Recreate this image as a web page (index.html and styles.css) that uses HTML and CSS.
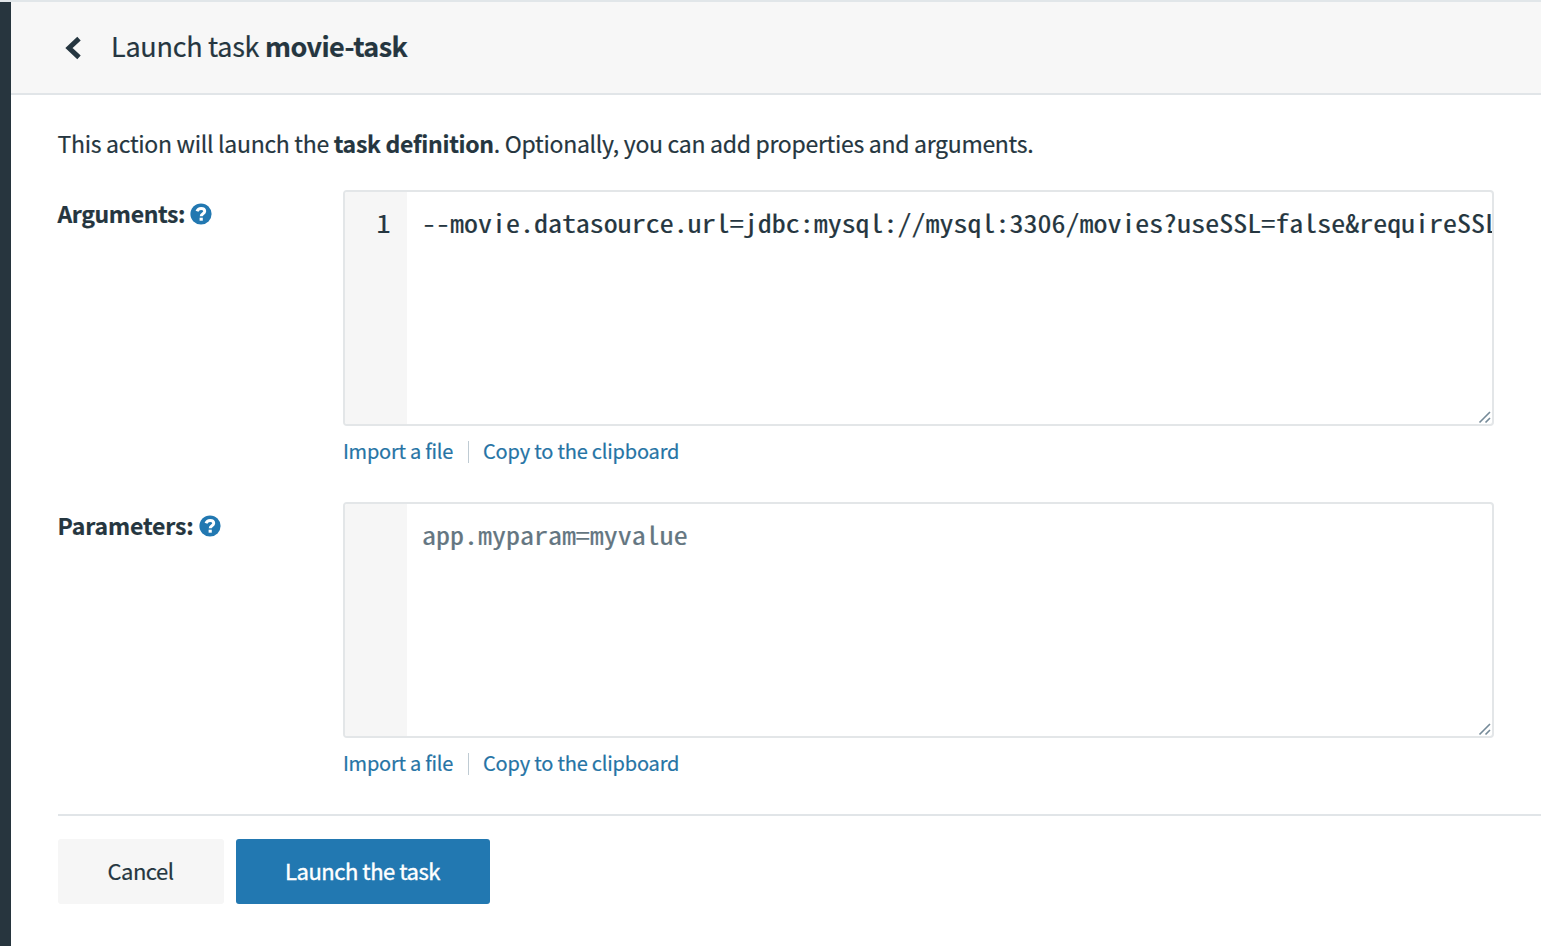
FILE: index.html
```html
<!DOCTYPE html>
<html lang="en">
<head>
<meta charset="utf-8">
<title>Launch task movie-task</title>
<link rel="stylesheet" href="styles.css">
</head>
<body>
<div class="app">
  <aside class="rail"></aside>
  <main class="page">
    <header class="header">
      <svg class="back" width="18" height="24" viewBox="0 0 18 24"><path d="M15 2.6 5 12l10 9.4" fill="none" stroke="#253640" stroke-width="5"/></svg>
      <h1 class="title"><span class="title-light">Launch task</span> <strong>movie-task</strong></h1>
    </header>
    <div class="content">
      <p class="intro">This action will launch the <strong>task definition</strong>. Optionally, you can add properties and arguments.</p>
      <section class="row">
        <div class="label"><span class="label-arguments">Arguments:</span>
          <svg class="help" width="22" height="22" viewBox="0 0 22 22"><circle cx="11" cy="11" r="10.6" fill="#2278b1"/><path d="M7 8.3Q8 5.5 11.1 5.5c2.2 0 3.6 1.1 3.6 2.8 0 2.5-3.5 2.3-3.5 4.9" fill="none" stroke="#fff" stroke-width="3"/><path d="M9.6 14.7h3.2v3H9.6z" fill="#fff"/></svg>
        </div>
        <div class="field">
          <div class="editor">
            <div class="gutter"><span class="mono line-number">1</span></div>
            <div class="code"><span class="mono">--movie.datasource.url=jdbc:mysql://mysql:3306/movies?useSSL=false&amp;requireSSL</span></div>
            <svg class="grip" width="14" height="14" viewBox="0 0 14 14"><path d="M1.5 12.5 12 2M7.5 12.5 12 8" stroke="#758a98" stroke-width="1.6"/></svg>
          </div>
          <div class="links"><a class="import">Import a file</a><span class="divider"></span><a class="copy">Copy to the clipboard</a></div>
        </div>
      </section>
      <section class="row">
        <div class="label"><span class="label-parameters">Parameters:</span>
          <svg class="help" width="22" height="22" viewBox="0 0 22 22"><circle cx="11" cy="11" r="10.6" fill="#2278b1"/><path d="M7 8.3Q8 5.5 11.1 5.5c2.2 0 3.6 1.1 3.6 2.8 0 2.5-3.5 2.3-3.5 4.9" fill="none" stroke="#fff" stroke-width="3"/><path d="M9.6 14.7h3.2v3H9.6z" fill="#fff"/></svg>
        </div>
        <div class="field">
          <div class="editor">
            <div class="gutter"></div>
            <div class="code placeholder"><span class="mono">app.myparam=myvalue</span></div>
            <svg class="grip" width="14" height="14" viewBox="0 0 14 14"><path d="M1.5 12.5 12 2M7.5 12.5 12 8" stroke="#758a98" stroke-width="1.6"/></svg>
          </div>
          <div class="links"><a class="import">Import a file</a><span class="divider"></span><a class="copy">Copy to the clipboard</a></div>
        </div>
      </section>
      <footer class="actions">
        <button class="button cancel">Cancel</button>
        <button class="button primary">Launch the task</button>
      </footer>
    </div>
  </main>
</div>
</body>
</html>
```
FILE: styles.css
```css
* { box-sizing: border-box; }
body { margin: 0; background: #fff; color: #253640; font-family: "Noto Sans CJK SC", "Noto Sans", sans-serif; font-size: 23px; overflow: hidden; -webkit-text-stroke: .2px currentColor; }
.app { display: flex; height: 946px; border-top: 2px solid #e1e6e9; }
.rail { flex: 0 0 11px; background: #27353e; }
.page { flex: 1; min-width: 0; }
.header { display: flex; align-items: center; height: 93px; padding-left: 53px; background: #f7f7f7; border-bottom: 2px solid #e1e5e8; }
.back { margin-right: 29px; }
.title { margin: 0; padding-bottom: 4px; font-size: 27px; font-weight: 400; line-height: 40px; letter-spacing: -.27px; white-space: nowrap; }
.title strong { letter-spacing: -.6px; }
.content { padding: 28px 0 0 46.5px; }
.intro { margin: 0; height: 67px; line-height: 40px; letter-spacing: -.29px; white-space: nowrap; }
.row { display: flex; height: 312px; }
.label { display: flex; gap: 5px; flex: 0 0 285.5px; height: 46px; align-items: center; font-weight: 700; white-space: nowrap; }
.help { margin-top: 1px; }
.label-arguments { letter-spacing: -.38px; }
.label-parameters { letter-spacing: -.12px; }
.field { flex: 0 0 1151px; min-width: 0; }
.editor { position: relative; display: flex; height: 236px; border: 2px solid #e3e6e8; border-radius: 4px; overflow: hidden; }
.gutter { flex: 0 0 62px; padding: 12px 16px 0 0; background: #f6f6f6; text-align: right; line-height: 36px; }
.code { padding: 12px 0 0 15px; line-height: 36px; white-space: nowrap; }
.mono { display: inline-block; font-family: "Noto Sans Mono CJK SC", "DejaVu Sans Mono", monospace; font-size: 25px; transform: scaleX(1.119); transform-origin: left; }
.line-number { transform-origin: right; }
.placeholder { color: #647681; }
.grip { position: absolute; right: 0; bottom: 0; }
.links { display: flex; align-items: center; height: 48px; font-size: 20px; color: #2674a5; white-space: nowrap; }
.import { letter-spacing: -.24px; }
.copy { letter-spacing: -.2px; }
.divider { width: 1px; height: 22px; margin: 3px 14.5px 0; background: #bfcbd3; }
.actions { display: flex; gap: 12px; padding-top: 23px; border-top: 2px solid #e1e5e8; }
.button { height: 65px; border: 0; border-radius: 3px; padding: 0 0 4px; font: inherit; font-size: 22px; letter-spacing: -.48px; white-space: nowrap; }
.cancel { width: 166px; background: #f6f6f6; color: #253640; }
.primary { width: 254px; background: #2278b1; color: #fff; -webkit-text-stroke: .4px #fff; }
```
